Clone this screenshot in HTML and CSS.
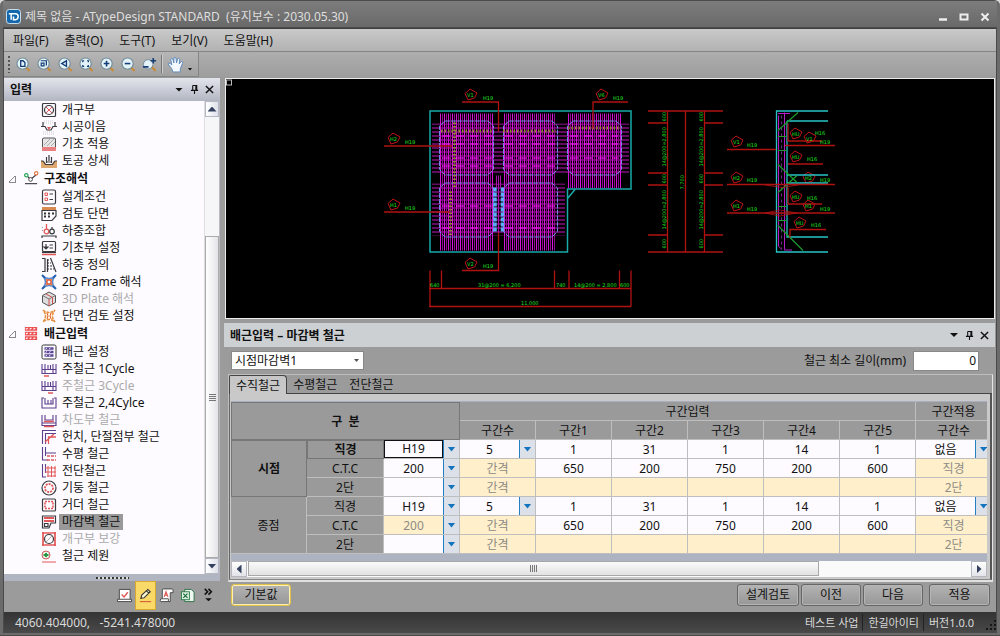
FILE: index.html
```html
<!DOCTYPE html>
<html lang="ko">
<head>
<meta charset="utf-8">
<title>제목 없음 - ATypeDesign STANDARD</title>
<link rel="stylesheet" href="styles.css">
</head>
<body>
<svg class="defs" aria-hidden="true">
  <defs>
    <symbol id="lens" viewBox="0 0 16 16">
      <path d="M10.5 11 14.5 15" stroke="#c98a35" stroke-width="2.2"/>
      <circle cx="7" cy="7" r="6" fill="#e4f3f8" stroke="#6f8a98" stroke-width="1.2"/>
    </symbol>
    <symbol id="tag" viewBox="0 0 14 12" overflow="visible">
      <path d="M1 5 6 .5 13 4.500 10.500 9.500 4 11.500Z" fill="none" stroke="#c01414" stroke-width="1"/>
    </symbol>
    <pattern id="bars" width="4" height="4" patternUnits="userSpaceOnUse"><path d="M.5 0V4" stroke="#d414d4"/><path d="M2.500 0V4" stroke="#8c088c"/></pattern>
    <pattern id="ties" width="4" height="4" patternUnits="userSpaceOnUse"><path d="M0 .5H4" stroke="#c414c4"/></pattern>
  </defs>
</svg>
<div class="window">
  <header class="titlebar">
    <svg class="logo" viewBox="0 0 16 16"><rect x=".5" y=".5" width="15" height="15" rx="3" fill="#1267ad" stroke="#d8e8f4"/><path d="M3 5H8M5.500 5V11.500M8 5H10Q13 5 13 8T10 11.500H8V8" fill="none" stroke="#fff" stroke-width="1.600"/></svg>
    <h1>제목 없음 - ATypeDesign STANDARD &nbsp;(유지보수 : 2030.05.30)</h1>
    <div class="winbtns">
      <button aria-label="최소화"><svg viewBox="0 0 10 10"><path d="M1 7.500H9" stroke-width="2.500"/></svg></button>
      <button aria-label="최대화"><svg viewBox="0 0 10 10"><path d="M1.500 2.500H8.500V7.500H1.500Z" stroke-width="2"/></svg></button>
      <button aria-label="닫기"><svg viewBox="0 0 10 10"><path d="M1.500 1.500 8.500 8.500M8.500 1.500 1.500 8.500" stroke-width="2"/></svg></button>
    </div>
  </header>
  <div class="frame">
  <nav class="menu"><button>파일(F)</button><button>출력(O)</button><button>도구(T)</button><button>보기(V)</button><button>도움말(H)</button></nav>
  <div class="toolrow">
    <div class="toolbar">
      <span class="grip"></span>
      <button aria-label="도면 보기"><svg viewBox="0 0 16 16"><use href="#lens"/><path d="M5 4H7.500L9.500 6V10H5Z" fill="none" stroke="#143f78" stroke-width="1.400"/></svg></button>
      <button aria-label="창 확대"><svg viewBox="0 0 16 16"><use href="#lens"/><path d="M4 4H10V9M4.500 6.500H7.500V9.500H4.500Z" fill="none" stroke="#143f78" stroke-width="1.300"/></svg></button>
      <button aria-label="이전 보기"><svg viewBox="0 0 16 16"><use href="#lens"/><path d="M9 4V10L4 7Z" fill="none" stroke="#143f78" stroke-width="1.500"/></svg></button>
      <button aria-label="전체 보기"><svg viewBox="0 0 16 16"><use href="#lens"/><path d="M4 5.500V4H5.500M8.500 4H10V5.500M10 8.500V10H8.500M5.500 10H4V8.500" fill="none" stroke="#143f78" stroke-width="1.300"/></svg></button>
      <button aria-label="확대"><svg viewBox="0 0 16 16"><use href="#lens"/><path d="M7 4V10M4 7H10" stroke="#143f78" stroke-width="1.700"/></svg></button>
      <button aria-label="축소"><svg viewBox="0 0 16 16"><use href="#lens"/><path d="M4 7H10" stroke="#143f78" stroke-width="1.700"/></svg></button>
      <button aria-label="실시간 확대"><svg viewBox="0 0 16 16"><path d="M10 10 14.500 15" stroke="#c98a35" stroke-width="2.200"/><path d="M9 3.500A5 5 0 1 0 11.500 8" fill="#e4f3f8" stroke="#6f8a98"/><path d="M1 10.500H7M9 4H15M12 1V7" stroke="#143f78" stroke-width="1.700"/></svg></button>
      <span class="sep"></span>
      <button class="hand" aria-label="이동"><svg viewBox="0 0 16 16"><path d="M4.500 12 1 7.500Q1 6 3 7L4.500 8.500 3.500 3Q4.500 1.500 5.500 3L6.500 6.500V2Q7.500 .5 8.500 2L9 6.500 10 2.500Q11.500 1.500 12 3L11.500 7.500 13.500 5Q15.500 5 14.500 7L12.500 12V15H5.500Z" fill="#f4faff" stroke="#5c88bc" stroke-width=".9"/></svg></button>
      <button class="more" aria-label="더보기"><span class="caret"></span></button>
    </div>
  </div>
  <div class="work">
    <aside class="side">
      <div class="panehead silver"><h2>입력</h2><div class="panebtns"><button aria-label="메뉴"><span class="caret big"></span></button><button aria-label="고정"><svg viewBox="0 0 10 10"><path d="M3 .5H7.500V6M3 .5V6M1 6H9M5 6V10M6.500 1V6"/></svg></button><button aria-label="닫기"><svg viewBox="0 0 10 10"><path d="M1 1 9 9M9 1 1 9" stroke-width="1.600"/></svg></button></div></div>
      <div class="treewrap">
        <ul class="tree">
          <li><svg viewBox="0 0 16 16"><rect x="1.500" y="1.500" width="13" height="13" rx="1" class="k"/><circle cx="8" cy="8" r="4.500" class="k"/><path d="M5 5 11 11M11 5 5 11" class="r"/></svg><span>개구부</span></li>
          <li><svg viewBox="0 0 16 16"><path d="M3 2H13M3 4H13M2 13H14M2 15H14" stroke="#ccc" stroke-dasharray="1 1" fill="none"/><path d="M0 7.500H4L6 11H10L12 7.500H16M2 3V7M14 3V7" class="k"/><path d="M6 8H10L8 11Z" class="rf"/></svg><span>시공이음</span></li>
          <li><svg viewBox="0 0 16 16"><path d="M1.500 11V3Q1.500 2 3 2H13Q14.500 2 14.500 3V11" fill="#e6e6e6" stroke="#555"/><path d="M3 9 9 3M6 10 13 3M10 10 14 6" stroke="#aaa"/><path d="M1 12H15M1 14H15" class="r" stroke-width="1.500"/></svg><span>기초 적용</span></li>
          <li><svg viewBox="0 0 16 16"><path d="M0 8H3L5 11H11L13 8H16V15H0Z" fill="#dda770"/><path d="M0 8H2L4.500 11.500H11.500L14 8H16M5.500 10V4M10.500 10V4M8 2V8M5 9H11" class="k"/></svg><span>토공 상세</span></li>
          <li class="group"><i class="fold"></i><svg viewBox="0 0 16 16"><path d="M3 5 7 9 13 4" class="k"/><circle cx="2.500" cy="4.500" r="1.800" fill="#fff" stroke="#2ba65b" stroke-width="1.300"/><circle cx="7" cy="9" r="2" fill="#fff" stroke="#444"/><circle cx="13" cy="2.500" r="1.800" fill="#fff" stroke="#e07848" stroke-width="1.300"/><path d="M1 13.500H14" class="k"/></svg><span>구조해석</span></li>
          <li><svg viewBox="0 0 16 16"><rect x="1.500" y="1" width="13" height="14" rx="1.500" class="k"/><path d="M4 4H6.500V6.500H4ZM4 9H6.500V11.500H4Z" class="r"/><path d="M8.500 5H12M8.500 10.500H12" class="k"/></svg><span>설계조건</span></li>
          <li><svg viewBox="0 0 16 16"><path d="M1 4.500H15V10L11 14.500H1Z" class="k"/><path d="M1 2.500H15" stroke="#d88c52" stroke-width="3"/><path d="M3 7.500H13M3 10.500H11" stroke="#333" stroke-width="2" stroke-dasharray="2 2"/></svg><span>검토 단면</span></li>
          <li><svg viewBox="0 0 16 16"><path d="M1 15V13H15V15" class="k"/><circle cx="5.500" cy="8.500" r="2.300" class="r" stroke-width="1.300"/><path d="M5.500 1V6" class="r" stroke-width="1.300"/><path d="M11 4V6" class="k"/><circle cx="11" cy="8.500" r="2.300" class="k"/><path d="M1.500 4V10" stroke="#999" stroke-dasharray="1 2"/></svg><span>하중조합</span></li>
          <li><svg viewBox="0 0 16 16"><rect x="1.500" y="1.500" width="13" height="10" rx="1" class="k"/><path d="M5 4V8M3 7H7L5 9ZM8.500 5H12M8.500 8H12" class="k"/><path d="M1 12.500H15" class="k"/><path d="M1 14.500H15" class="r" stroke-width="1.500"/></svg><span>기초부 설정</span></li>
          <li><svg viewBox="0 0 16 16"><path d="M1 1.500H4V14.500H1M6.500 2V15M9.500 1 15 15" class="k"/><path d="M6 3H9M6 6H10M6 9H11M6 12H13" stroke="#333" stroke-dasharray="2 1"/></svg><span>하중 정의</span></li>
          <li><svg viewBox="0 0 16 16"><path d="M2 2Q8 7 14 2Q9 8 14 14Q8 9 2 14Q7 8 2 2Z" fill="#f07a4a" stroke="#5b8fd0" stroke-width="1.500"/><path d="M1 1 4 4M15 1 12 4M1 15 4 12M15 15 12 12" stroke="#2a62b4" stroke-width="2"/><circle cx="8" cy="8" r="2" fill="#fff" stroke="#df4a35"/></svg><span>2D Frame 해석</span></li>
          <li class="off"><svg viewBox="0 0 16 16"><path d="M1.500 4.500 8 1 14.500 4.500V11.500L8 15 1.500 11.500Z" fill="#ddd" stroke="#555"/><path d="M1.500 4.500 8 8 14.500 4.500" stroke="#777" fill="none"/><path d="M5 3 11.500 6.500V13M8 8V15" stroke="#cf5050" fill="none"/></svg><span>3D Plate 해석</span></li>
          <li><svg viewBox="0 0 16 16"><path d="M2 2Q8 7 14 2Q9 8 14 14Q8 9 2 14Q7 8 2 2Z" fill="#fff7df" stroke="#e68a3c" stroke-width="1.500" stroke-dasharray="3 1"/><path d="M6 5Q8 8 6 11M10 5Q8 8 10 11" stroke="#df5a35" fill="none"/></svg><span>단면 검토 설정</span></li>
          <li class="group"><i class="fold"></i><svg viewBox="0 0 16 16"><path d="M1 3H14M1 8H14M1 13H14" stroke="#ec5050" stroke-width="4"/><path d="M2 3.500 4 2.500M6 3.500 8 2.500M10 3.500 12 2.500M2 8.500 4 7.500M6 8.500 8 7.500M10 8.500 12 7.500M2 13.500 4 12.500M6 13.500 8 12.500M10 13.500 12 12.500" stroke="#fff" stroke-width="1.200"/></svg><span>배근입력</span></li>
          <li><svg viewBox="0 0 16 16"><rect x="1" y="1" width="14" height="14" rx="1.500" fill="none" stroke="#333"/><path d="M3.500 4.500H12.500M3.500 8H12.500M3.500 11.500H12.500" stroke="#5a4596" stroke-width="2.600"/><path d="M4.500 5 6 4M8 5 9.500 4M4.500 8.500 6 7.500M8 8.500 9.500 7.500M4.500 12 6 11M8 12 9.500 11" stroke="#fff" stroke-width=".9"/></svg><span>배근 설정</span></li>
          <li><svg viewBox="0 0 16 16"><path d="M1 3V12.500H15V3M4 3V8.500H12V3M1 8.500H15M4 8V12M12 8V12M7 4V8M9.500 4V8" class="p"/><path d="M3 15H8" class="r" stroke-width="1.500"/></svg><span>주철근 1Cycle</span></li>
          <li class="off"><svg viewBox="0 0 16 16"><path d="M1 3V12.500H15V3M4 3V8.500H12V3M1 8.500H15M4 8V12M12 8V12M7 4V8M9.500 4V8" class="p"/><path d="M7 15H12" class="r" stroke-width="1.500"/></svg><span>주철근 3Cycle</span></li>
          <li><svg viewBox="0 0 16 16"><path d="M3 3H1V13H4M13 3H15V13H12M4 3V9H12V3M4 13H12M7 5V9M10 5V9" class="p"/></svg><span>주철근 2,4Cylce</span></li>
          <li class="off"><svg viewBox="0 0 16 16"><path d="M1 3V13.500H15V3M4 3V8H12V3M1 11H15" class="p"/><path d="M3 9.500H13M3 14.500H13" class="r" stroke-width="1.500"/></svg><span>차도부 철근</span></li>
          <li><svg viewBox="0 0 16 16"><path d="M1.500 15V1.500H15M4.500 15V4.500H15" class="p"/><path d="M4 13 13 5M7.500 15V8H15" class="r" stroke-width="1.300"/></svg><span>헌치, 단절점부 철근</span></li>
          <li><svg viewBox="0 0 16 16"><path d="M1.500 1V14H7M4.500 1V10M4.500 7H15" class="p"/><path d="M6 10H15M6 14H15" class="r" stroke-dasharray="3 1" stroke-width="1.500"/></svg><span>수평 철근</span></li>
          <li><svg viewBox="0 0 16 16"><path d="M1.500 1V14H5M4.500 1V10" class="p"/><path d="M4 5H15M4 9H15M6 13H15M7 3V14M10.500 3V14M14 3V14" class="r"/></svg><span>전단철근</span></li>
          <li><svg viewBox="0 0 16 16"><circle cx="8" cy="8" r="7" class="k"/><circle cx="8" cy="8" r="4" class="r" stroke-width="1.800" stroke-dasharray="2 1"/></svg><span>기둥 철근</span></li>
          <li><svg viewBox="0 0 16 16"><rect x="1.500" y="2" width="13" height="12" rx="1" class="k"/><rect x="4" y="4.500" width="8" height="7" class="r" stroke-width="1.600" stroke-dasharray="2 1"/></svg><span>거더 철근</span></li>
          <li class="on"><svg viewBox="0 0 16 16"><path d="M1.500 2H14.500V9H10L8 14H1.500Z" class="k"/><path d="M3 4H13M3 7H13" class="r" stroke-width="2"/><path d="M3.500 9.500H7V12.500H3.500Z" class="k"/></svg><span>마감벽 철근</span></li>
          <li class="off"><svg viewBox="0 0 16 16"><path d="M1 2H15M1 14H15M2 1V15M14 1V15" class="r" stroke-width="1.700"/><circle cx="8" cy="8" r="4.500" class="k"/><path d="M5 11 11 5" stroke="#aaa"/></svg><span>개구부 보강</span></li>
          <li><svg viewBox="0 0 16 16"><circle cx="5" cy="7" r="4" fill="#e7f4e8" stroke="#cf5959"/><path d="M2.500 7H7.500M5 5V9" stroke="#2b9448" stroke-width="2"/><path d="M1 14H15" class="r"/></svg><span>철근 제원</span></li>
        </ul>
        <div class="vscroll"><button aria-label="위로"><i class="tri up"></i></button><div class="vtrack"><div class="vthumb"><i></i></div></div><button aria-label="아래로"><i class="tri down"></i></button></div>
      </div>
      <div class="splitter"><i></i></div>
      <div class="modes">
        <button aria-label="검토"><svg viewBox="0 0 16 16"><path d="M2.500 12V1.500H14V12M.5 12V14.500H15.500V12Z" fill="#fff" stroke="#444"/><path d="M5 7 7.500 9.500 11.500 4.500" class="r" stroke-width="1.500"/></svg></button>
        <button class="active" aria-label="입력"><svg viewBox="0 0 16 16"><path d="M3 11 4 7.500 10.500 1.500 13 4 6.500 10.500ZM9 3 11.500 5.500" fill="#fff8d0" stroke="#333" stroke-width="1.200"/><path d="M2 14.500H14" stroke="#d9663b" stroke-width="1.300"/></svg></button>
        <button aria-label="도면"><svg viewBox="0 0 16 16"><path d="M3.500 11V2Q3.500 1 5 1H14Q15.500 1 15 5H12V14.500H2Q.5 13 2 11.500H10V14" fill="#fff" stroke="#444"/><path d="M5.500 9.500 7.500 4 9.500 9.500M6 7.500H9" class="r" stroke-width="1.300"/></svg></button>
        <button aria-label="엑셀"><svg viewBox="0 0 16 16"><path d="M5 1.500H12L15 4.500V14.500H5Z" fill="#eef8f0" stroke="#2d6f47"/><rect x="1.500" y="4" width="8.500" height="8.500" fill="#dff0e5" stroke="#2a7b49"/><path d="M3.500 6 8 10.500M8 6 3.500 10.500" stroke="#176b37" stroke-width="1.300"/></svg></button>
        <button aria-label="더보기"><svg viewBox="0 0 16 16"><path d="M4 1 7 4 4 7M8 1 11 4 8 7" fill="none" stroke="#111" stroke-width="1.700"/><path d="M4.500 11H11.500L8 14Z" fill="#111"/></svg></button>
      </div>
    </aside>
    <main class="main">
      <div class="canvas">
        <svg viewBox="226 80 768 238" role="img" aria-label="마감벽 배근도">
          <rect x="226.500" y="80.500" width="5" height="5" fill="#000" stroke="#bbb"/>
          <g fill="url(#ties)"><rect x="432" y="124" width="197" height="51"/><rect x="432" y="184" width="133" height="52"/></g>
          <g fill="url(#bars)"><rect x="440" y="114" width="54" height="137"/><rect x="503" y="114" width="53" height="137"/><rect x="568" y="114" width="53" height="75"/></g>
          <path d="M442 136.500H492M505 136.500H555M570 136.500H618M442 144.500H492M505 144.500H555M570 144.500H618M442 158.500H492M505 158.500H555M570 158.500H618M442 166.500H492M505 166.500H555M442 206.500H492M505 206.500H555M442 228.500H492M505 228.500H555" stroke="#ff18ff" stroke-dasharray="8 6"/>
          <g fill="none" stroke="#7288e4" stroke-width="1">
            <path id="cell" stroke-dasharray="5 1" d="M445 121.500H488L493.500 126.500V170L488 175.500H445L439.500 170V126.500Z"/>
            <use href="#cell" x="64"/><use href="#cell" x="128"/><use href="#cell" y="62"/><use href="#cell" x="64" y="62"/>
          </g>
          <path d="M430 111.500H631V189.500H567.500V252.500H430ZM567.500 199 575 190" fill="none" stroke="#18a9a9" stroke-width="1.500"/>
          <path d="M441 131.500H493M503 131.500H556M568 128.500H621M454.500 123V188M450.500 192V237" stroke="#8f8230" stroke-width="3" stroke-dasharray="1.500 2"/>
          <path d="M495 188V233M502.500 188V233" stroke="#58aef8" stroke-width="3.500" stroke-dasharray="4 1"/>
          <path d="M496.500 176V188M500.500 176V188M498.500 176V235" stroke="#b010b0"/>
          <path d="M462 102.500H498.500V132M628 102.500H593V129M384 146.500H452M384 212.500H450M462 271H498.500V233" class="red"/>
          <path d="M430 271V307M441.500 271V289M554.500 271V289M569 271V289M619.500 271V289M631 271V307M429 289H631M429 307H631" class="red"/>
          <path d="M648 111.500H723M648 123.500H667M704 123.500H723M648 173.500H667M704 173.500H723M648 185.500H667M704 185.500H723M648 235.500H667M704 235.500H723M648 252.500H723M667.500 111V253M685.500 111V253M704.500 111V253" class="red"/>
          <g>
            <use href="#tag" x="464" y="89" width="14" height="12"/><use href="#tag" x="595" y="89" width="14" height="12"/><use href="#tag" x="387" y="133" width="14" height="12"/><use href="#tag" x="387" y="199" width="14" height="12"/><use href="#tag" x="464" y="258" width="14" height="12"/>
            <use href="#tag" x="730" y="136" width="14" height="12"/><use href="#tag" x="730" y="172" width="14" height="12"/><use href="#tag" x="730" y="200" width="14" height="12"/>
            <use href="#tag" x="789" y="128" width="14" height="12"/><use href="#tag" x="803" y="132" width="14" height="12"/><use href="#tag" x="789" y="151" width="14" height="12"/><use href="#tag" x="802" y="172" width="14" height="12"/><use href="#tag" x="789" y="191" width="14" height="12"/><use href="#tag" x="802" y="200" width="14" height="12"/><use href="#tag" x="793" y="217" width="14" height="12"/>
          </g>
          <g fill="none" stroke="#28c3c7" stroke-width="1.300"><path d="M828 111.500H776.500V252.500H828M828 121.500H787M787 121.500V237.500H828M787 175.500H828M787 183.500H828"/></g>
          <path d="M778.500 116V247L782 250M784.500 113V250M778 114H790M784 250.500H792" fill="none" stroke="#b51bc7"/>
          <path d="M781.500 116V249" stroke="#6b2a86" stroke-dasharray="3 3"/>
          <path d="M778 131 798 113M778 165 797 183M778 193 797 176M778 226 803 251M778 137H786M778 151H786M778 207H786M778 221H786" fill="none" stroke="#1b9b2b" stroke-width="1.200"/>
          <path d="M727 150H776M785 146H835M788 124V141.500H822M788 164.500H823M727 185H835M788 188V204.500H822M727 213.500H835M790 238V230H826" class="red"/>
          <path d="M765 185.500 782 188 798 185.500M765 213.500 780 210.500 797 213.500 780 216.500Z" fill="none" stroke="#b01212" stroke-width=".8"/>
          <g class="cad">
            <text x="467" y="97">V1</text><text x="598" y="97">V6</text><text x="390" y="141">H2</text><text x="390" y="207">H1</text><text x="467" y="266">V2</text>
            <text x="483" y="100">H19</text><text x="613" y="100">H19</text><text x="405" y="144">H19</text><text x="405" y="210">H19</text><text x="483" y="268">H19</text>
            <text x="430" y="287.500">640</text><text x="478" y="287.500">31@200 = 6,200</text><text x="556" y="287.500">740</text><text x="574" y="287.500">14@200 = 2,800</text><text x="620" y="287.500">600</text><text x="521" y="305.500">11,000</text>
            <text x="733" y="144">V1</text><text x="733" y="180">H2</text><text x="733" y="208">H1</text><text x="747" y="147">H19</text><text x="747" y="182">H19</text><text x="747" y="211">H19</text>
            <text x="792" y="136">HU</text><text x="806" y="141">V1</text><text x="792" y="159">HU</text><text x="805" y="180">H2</text><text x="792" y="199">HU</text><text x="805" y="208">H1</text><text x="796" y="225">HU</text>
            <text x="815" y="135">H16</text><text x="820" y="144">H19</text><text x="807" y="161">H16</text><text x="820" y="182">H19</text><text x="807" y="200">H16</text><text x="820" y="211">H19</text><text x="811" y="227">H16</text>
            <g id="dims"><text transform="translate(666 122) rotate(-90)">600</text><text transform="translate(666 167) rotate(-90)">14@200=2,800</text><text transform="translate(666 184) rotate(-90)">600</text><text transform="translate(666 230) rotate(-90)">14@200=2,800</text><text transform="translate(666 249) rotate(-90)">600</text></g>
            <use href="#dims" x="37"/><text transform="translate(684 190) rotate(-90)">7,700</text>
          </g>
        </svg>
      </div>
      <section class="editor">
        <div class="panehead pale"><h2>배근입력 – 마감벽 철근</h2><div class="panebtns"><button aria-label="메뉴"><span class="caret big"></span></button><button aria-label="고정"><svg viewBox="0 0 10 10"><path d="M3 .5H7.500V6M3 .5V6M1 6H9M5 6V10M6.500 1V6"/></svg></button><button aria-label="닫기"><svg viewBox="0 0 10 10"><path d="M1 1 9 9M9 1 1 9" stroke-width="1.600"/></svg></button></div></div>
        <div class="options">
          <div class="combo"><select aria-label="마감벽 선택"><option>시점마감벽1</option></select></div>
          <label for="minlen">철근 최소 길이(mm)</label><input id="minlen" type="text" value="0">
        </div>
        <div class="tabbox">
          <div class="tabs" role="tablist"><button role="tab" aria-selected="true" class="sel">수직철근</button><button role="tab">수평철근</button><button role="tab">전단철근</button></div>
          <div class="page"><div class="sheet">
            <div class="clip">
            <table>
              <colgroup><col><col class="wide"><col><col><col><col><col><col><col><col></colgroup>
              <thead>
                <tr><th colspan="3" rowspan="2" class="box strong">구 &nbsp;분</th><th colspan="6">구간입력</th><th>구간적용</th></tr>
                <tr><th>구간수</th><th>구간1</th><th>구간2</th><th>구간3</th><th>구간4</th><th>구간5</th><th>구간수</th></tr>
              </thead>
              <tbody>
                <tr><th rowspan="3" class="box strong">시점</th><th class="box strong">직경</th><td class="focus"><div class="pick"><select aria-label="시점 직경"><option>H19</option></select></div></td><td><div class="pick"><select aria-label="시점 구간수"><option>5</option></select></div></td><td>1</td><td>31</td><td>1</td><td>14</td><td>1</td><td><div class="pick"><select aria-label="시점 구간적용"><option>없음</option></select></div></td></tr>
                <tr><th>C.T.C</th><td><div class="pick"><select aria-label="시점 C.T.C"><option>200</option></select></div></td><td class="dim">간격</td><td>650</td><td>200</td><td>750</td><td>200</td><td>600</td><td class="dim">직경</td></tr>
                <tr><th>2단</th><td><div class="pick"><select aria-label="시점 2단"><option></option></select></div></td><td class="dim">간격</td><td class="dim"></td><td class="dim"></td><td class="dim"></td><td class="dim"></td><td class="dim"></td><td class="dim">2단</td></tr>
                <tr><th rowspan="3">종점</th><th>직경</th><td><div class="pick"><select aria-label="종점 직경"><option>H19</option></select></div></td><td><div class="pick"><select aria-label="종점 구간수"><option>5</option></select></div></td><td>1</td><td>31</td><td>1</td><td>14</td><td>1</td><td><div class="pick"><select aria-label="종점 구간적용"><option>없음</option></select></div></td></tr>
                <tr><th>C.T.C</th><td class="dim"><div class="pick"><select aria-label="종점 C.T.C"><option>200</option></select></div></td><td class="dim">간격</td><td>650</td><td>200</td><td>750</td><td>200</td><td>600</td><td class="dim">직경</td></tr>
                <tr><th>2단</th><td><div class="pick"><select aria-label="종점 2단"><option></option></select></div></td><td class="dim">간격</td><td class="dim"></td><td class="dim"></td><td class="dim"></td><td class="dim"></td><td class="dim"></td><td class="dim">2단</td></tr>
              </tbody>
            </table>
            </div>
            <div class="hscroll"><button aria-label="왼쪽"><i class="tri left"></i></button><div class="htrack"><div class="hthumb"><i></i></div></div><button aria-label="오른쪽"><i class="tri right"></i></button></div>
          </div></div>
        </div>
        <div class="actions"><button class="default">기본값</button><span class="fill"></span><button>설계검토</button><button>이전</button><button>다음</button><button class="apply">적용</button></div>
      </section>
    </main>
  </div>
  <footer class="status"><span class="coords">4060.404000, &nbsp;&nbsp;-5241.478000</span><span class="info">테스트 사업</span><span class="info">한길아이티</span><span class="info">버전1.0.0</span><svg class="resize" viewBox="0 0 12 12"><path d="M10 2h2M6 6h2M10 6h2M2 10h2M6 10h2M10 10h2" stroke="#161616" stroke-width="2"/></svg></footer>
  </div>
</div>
</body>
</html>
```
FILE: styles.css
```css
* { box-sizing: border-box; }
html, body { height: 100%; }
body {
  margin: 0;
  background: #d8d8d8;
  color: #111;
  font: 12px/17px "Noto Sans", "Noto Sans CJK KR", sans-serif;
}
button, select, input { font: inherit; color: inherit; margin: 0; padding: 0; border: 0; background: none; border-radius: 0; }
h1, h2 { margin: 0; font-size: 12px; }
svg { display: block; }
.defs { position: absolute; width: 0; height: 0; }

.window { display: flex; flex-direction: column; min-height: 100vh; padding: 0 4px 3px; background: #6b6b6b; border: 1px solid #4b4b4b; border-width: 1px 0; border-radius: 6px 6px 0 0; }
.titlebar { display: flex; align-items: center; gap: 4px; height: 27px; padding: 4px 7px 0 3px; margin: 0 -1px; background: linear-gradient(#7d7d7d, #686868); color: #dedede; }
.logo { width: 15px; height: 15px; }
.titlebar h1 { flex: 1; font-weight: 400; white-space: pre; }
.winbtns { display: flex; gap: 11px; }
.winbtns svg { width: 10px; height: 10px; fill: none; stroke: #eee; }
.frame { flex: 1; display: flex; flex-direction: column; background: #9b9b9b; border-top: 1px solid #3f3f3f; outline: 1px solid #4a4a4a; }
.menu { display: flex; gap: 16px; height: 23px; padding-left: 9px; background: linear-gradient(#c9c9c9, #b2b2b2); border-bottom: 1px solid #858585; }
.toolrow { height: 25px; background: linear-gradient(#aeaeae, #9d9d9d); }
.toolbar { display: inline-flex; align-items: center; height: 25px; padding-left: 4px; border: 1px solid #858585; border-width: 0 1px 1px 0; background: linear-gradient(#b6b6b6, #a0a0a0); }
.toolbar button { width: 21px; display: grid; place-items: center; }
.toolbar svg { width: 15px; height: 15px; }
.toolbar use { width: 16px; }
.grip { width: 2px; height: 17px; margin-right: 3px; background: repeating-linear-gradient(#555 0 2px, transparent 2px 4px); }
.sep { width: 2px; height: 18px; margin: 0 1px; border-left: 1px solid #777; border-right: 1px solid #ccc; }
.toolbar .hand { width: 22px; }
.hand svg { width: 17px; height: 17px; }
.toolbar .more { width: 12px; padding: 10px 4px 0 0; }
.caret { width: 5px; height: 3px; background: #111; clip-path: polygon(0 0, 100% 0, 50% 100%); }
.caret.big { width: 8px; height: 4px; }

.work { flex: 1; display: flex; gap: 4px; padding: 1px 1px 0 0; }
.side { width: 216px; flex: none; display: flex; flex-direction: column; }
.panehead { display: flex; align-items: center; justify-content: space-between; padding: 0 6px; }
.panehead h2 { font-weight: 700; }
.silver { height: 23px; background: linear-gradient(#e3e5ec, #b2b6c2); }
.pale { height: 24px; background: #ccd0d3; }
.panebtns { display: flex; align-items: center; gap: 5px; }
.panebtns button { width: 10px; display: grid; place-items: center; }
.panebtns svg { width: 9px; height: 9px; fill: none; stroke: #111; stroke-width: 1.2; }
.treewrap { flex: 1; display: flex; background: #fdfbff; border-right: 1px solid #b8bac4; }
.tree { flex: 1; margin: 0; padding: 0; list-style: none; }
.tree li { display: flex; align-items: center; gap: 2px; height: 17px; padding-left: 37px; white-space: pre; }
.tree li svg { width: 16px; height: 16px; overflow: visible; }
.tree li span { padding: 0 3px; line-height: 16px; }
.tree .group { height: 19px; padding-left: 5px; font-weight: 700; }
.tree .group svg { margin-left: 6px; width: 15px; height: 15px; }
.tree .group span { padding: 0 3px; }
.fold { width: 7px; height: 7px; background: linear-gradient(135deg, transparent 47%, #888 47% 57%, transparent 57%); border: 1px solid #888; border-width: 0 1px 1px 0; margin-top: 2px; }
.tree .off { color: #aaa; }
.tree .on span { background: #999; }
.k { fill: none; stroke: #3b3b3f; stroke-width: 1.2; }
.r { fill: none; stroke: #e25858; }
.rf { fill: #e25858; }
.p { fill: none; stroke: #5b3f8c; stroke-width: 1.1; }
.vscroll { width: 15px; display: flex; flex-direction: column; background: #f6f6f9; border-left: 1px solid #ddd; }
.vscroll button { height: 16px; background: linear-gradient(90deg, #fff, #dfe1ea); border: 1px solid #b5b7c2; display: grid; place-items: center; }
.vtrack { flex: 1; display: flex; flex-direction: column; justify-content: flex-end; }
.vthumb { height: 73%; border: 1px solid #aaa; background: linear-gradient(90deg, #fff, #e4e4e8); display: grid; place-items: center; }
.vthumb i { width: 7px; height: 7px; background: repeating-linear-gradient(#777 0 1px, transparent 1px 2px); }
.tri { background: #35405e; }
.up, .down { width: 9px; height: 5px; }
.up { clip-path: polygon(50% 0, 100% 100%, 0 100%); }
.down { clip-path: polygon(0 0, 100% 0, 50% 100%); }
.left, .right { width: 5px; height: 9px; }
.left { clip-path: polygon(0 50%, 100% 0, 100% 100%); }
.right { clip-path: polygon(0 0, 100% 50%, 0 100%); }
.splitter { height: 7px; display: grid; place-items: center; background: #b1b5c1; }
.splitter i { width: 33px; height: 2px; background: repeating-linear-gradient(90deg, #333 0 2px, #ddd 2px 4px); }
.modes { display: flex; justify-content: flex-end; height: 31px; padding: 0 1px 2px 0; }
.modes button { width: 21px; display: grid; place-items: center; }
.modes svg { width: 15px; height: 15px; }
.modes .active { background: #f9d968; border: 1px solid #d9a92f; }

.main { flex: 1; min-width: 0; display: flex; flex-direction: column; gap: 4px; }
.canvas { flex: 1; margin-left: 1px; background: #000; border: 1px solid #ececec; }
.canvas svg { width: 100%; height: 100%; }
.red { fill: none; stroke: #b01212; stroke-width: 1.3; }
.cad { fill: #1fe01f; font: 5px "DejaVu Sans", sans-serif; }

.options { display: flex; align-items: center; height: 27px; padding: 0 16px 0 7px; }
.combo { position: relative; width: 133px; margin-right: auto; }
.combo select { display: block; width: 100%; height: 19px; padding-left: 3px; appearance: none; background: #fff; border: 1px solid #888; }
.combo::after { content: ""; position: absolute; right: 5px; top: 8px; width: 5px; height: 3px; background: #555; clip-path: polygon(0 0, 100% 0, 50% 100%); pointer-events: none; }
.options input { width: 66px; height: 20px; margin-left: 7px; padding: 0 2px; text-align: right; background: #fff; border: 1px solid #888; }
.tabbox { margin: 0 2px 0 4px; border: 1px solid #bdbdbd; border-right-color: #e6e6e6; border-bottom: 2px solid #e0e0e0; }
.tabs { display: flex; align-items: flex-end; height: 19px; border-bottom: 1px solid #444; }
.tabs button { height: 17px; padding: 0 6px; }
.tabs .sel { height: 19px; margin-bottom: -1px; background: linear-gradient(#c6c6c6, #c9c9c9); border: 1px solid #444; border-bottom: 0; border-radius: 2px 4px 0 0; }
.page { padding: 7px 3px 2px 1px; background: #c9c9c9; border-left: 1px solid #666; border-right: 2px solid #555; border-bottom: 1px solid #888; }
.sheet { background: #adb3c1; border-top: 1px solid #aaafbf; }
.clip { overflow: hidden; }
table { table-layout: fixed; width: 761px; border-collapse: separate; border-spacing: 0; }
col { width: 76px; }
.wide { width: 77px; }
th, td { height: 19px; padding: 0; text-align: center; line-height: 17px; border: 1px solid #bebebe; border-width: 0 1px 1px 0; font-weight: 400; white-space: pre; }
th { background: #9a9a9a; }
td { background: #fdfbff; }
.strong { font-weight: 700; }
.box { border: 1px solid #777; }
.dim { background: #fff0cb; color: #8d8b85; }
.pick { display: grid; grid-template-columns: 1fr 16px; height: 18px; }
.pick select { grid-area: 1 / 1 / 2 / 3; width: 100%; padding-right: 16px; appearance: none; text-align: center; text-align-last: center; line-height: 17px; }
.pick::before { content: ""; grid-area: 1 / 2; background: #dce0e8; border-left: 1px solid #2580c3; }
.pick::after { content: ""; grid-area: 1 / 2; place-self: center; width: 8px; height: 5px; margin-left: 1px; background: #1374bd; clip-path: polygon(0 0, 100% 0, 50% 100%); pointer-events: none; }
.focus .pick select { border: 1px solid #111; margin-right: 16px; padding: 0; width: auto; line-height: 16px; }
.hscroll { display: flex; height: 16px; margin-top: 7px; background: #fafafa; }
.hscroll button { width: 16px; display: grid; place-items: center; background: linear-gradient(#fff, #e3e4ea); border: 1px solid #b8b8c0; }
.htrack { flex: 1; padding-left: 1px; }
.hthumb { width: 79%; height: 15px; display: grid; place-items: center; background: linear-gradient(#fafafa, #e2e2e2); border: 1px solid #a8a8a8; }
.hthumb i { width: 8px; height: 7px; background: repeating-linear-gradient(90deg, #777 0 1px, transparent 1px 2px); }
.actions { display: flex; gap: 2px; padding: 2px 5px 6px 7px; }
.actions button { width: 60px; height: 22px; line-height: 18px; background: linear-gradient(#b3b3b3, #979797); border: 1px solid #666; border-radius: 3px; box-shadow: inset 0 0 0 1px #b5b5b5; }
.actions button:nth-of-type(2) { width: 62px; }
.actions .default { border-color: #e0c04a; box-shadow: inset 0 0 0 1px #fff1b0; }
.actions .apply { margin-left: 4px; width: 61px; }
.fill { flex: 1; }
.status { display: flex; align-items: center; height: 20px; padding-left: 11px; background: linear-gradient(#343434, #484848); color: #dadada; }
.coords { flex: 1; }
.info { font-size: 11px; }
.info + .info { border-left: 1px solid #222; margin-left: 4px; padding-left: 5px; }
.resize { width: 12px; height: 12px; margin: 6px 0 0 10px; }
```
